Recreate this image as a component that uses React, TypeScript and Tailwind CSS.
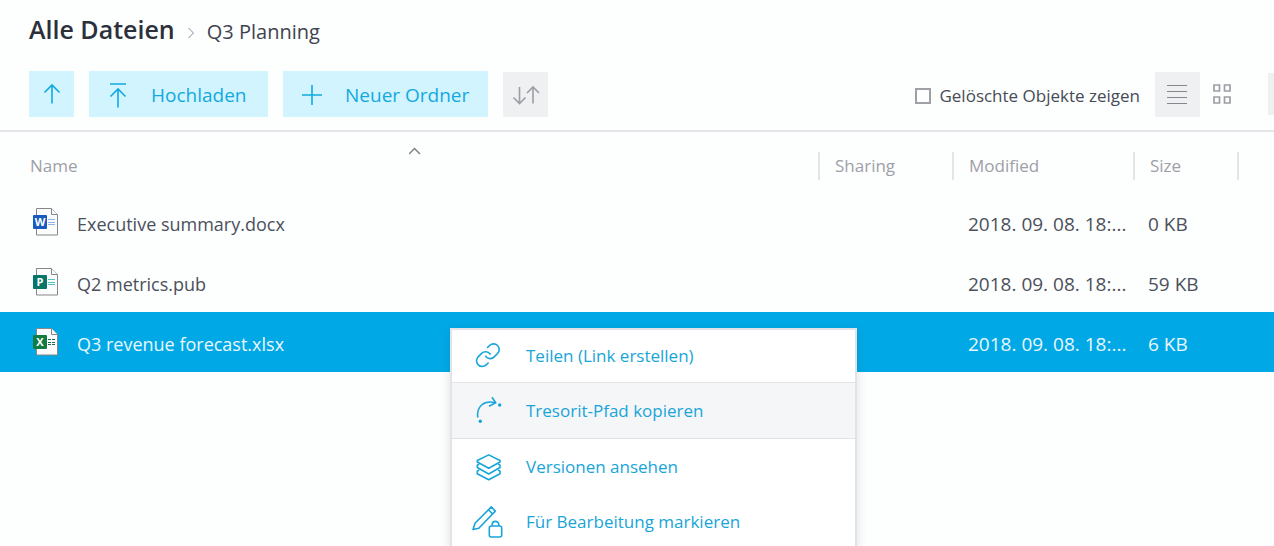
import type { ReactNode } from 'react'
import clsx from 'clsx'

type FileKind = 'word' | 'publisher' | 'excel'

interface FileEntry {
  name: string
  kind: FileKind
  modified: string
  size: string
  selected?: boolean
}

interface MenuEntry {
  label: string
  icon: ReactNode
  itemClass: string
}

const files: FileEntry[] = [
  { name: 'Executive summary.docx', kind: 'word', modified: '2018. 09. 08. 18:...', size: '0 KB' },
  { name: 'Q2 metrics.pub', kind: 'publisher', modified: '2018. 09. 08. 18:...', size: '59 KB' },
  { name: 'Q3 revenue forecast.xlsx', kind: 'excel', modified: '2018. 09. 08. 18:...', size: '6 KB', selected: true },
]

const kindConfig: Record<FileKind, { letter: string; badge: string; lines: string }> = {
  word: { letter: 'W', badge: '#185abd', lines: '#8fb4e8' },
  publisher: { letter: 'P', badge: '#077568', lines: '#4fc4bd' },
  excel: { letter: 'X', badge: '#107c41', lines: '#1f6b45' },
}

function FileIcon({ kind }: { kind: FileKind }) {
  const { letter, badge, lines } = kindConfig[kind]
  return (
    <svg width="26" height="28" viewBox="0 0 26 28" className="shrink-0" aria-hidden="true">
      <path d="M3.500 .5h15l6 6v20.500h-21z" fill="#fcfcfd" stroke="#85878c" strokeLinejoin="round" />
      <path d="M18.500 .5v6h6" fill="#fcfcfd" stroke="#85878c" />
      {kind === 'excel' ? (
        <path d="M15 11.500h3M19 11.500h3M15 14.500h3M19 14.500h3M15 16.500h3M19 16.500h3" stroke={lines} />
      ) : (
        <path d="M15 11.500h7M15 14.500h7M15 16.500h7" stroke={lines} />
      )}
      <rect x="0" y="7" width="14" height="14" rx="1" fill={badge} />
      <text x="7" y="18" textAnchor="middle" fontSize="11" fontWeight="700" fill="#fff">
        {letter}
      </text>
    </svg>
  )
}

function LineIcon({ size = 28, children }: { size?: number; children: ReactNode }) {
  return (
    <svg
      width={size}
      height={size}
      viewBox={`0 0 ${size} ${size}`}
      fill="none"
      stroke="currentColor"
      strokeWidth="1.600"
      className="shrink-0"
      aria-hidden="true"
    >
      {children}
    </svg>
  )
}

const menu: MenuEntry[] = [
  {
    label: 'Teilen (Link erstellen)',
    itemClass: 'h-[53px] border-b',
    icon: (
      <LineIcon size={32}>
        <g strokeLinecap="round" strokeWidth="1.400" transform="translate(2.200 1.500) scale(1.140)">
          <path d="M10 13a5 5 0 0 0 7.540.540l3-3a5 5 0 0 0-7.070-7.070l-1.720 1.710" />
          <path d="M14 11a5 5 0 0 0-7.540-.540l-3 3a5 5 0 0 0 7.070 7.070l1.710-1.710" />
        </g>
      </LineIcon>
    ),
  },
  {
    label: 'Tresorit-Pfad kopieren',
    itemClass: 'h-14 border-b bg-[#f5f6f8]',
    icon: (
      <LineIcon size={32}>
        <path d="M5.700 22.500C4.500 12 11.500 4.500 23.500 7.800" />
        <path d="M20 2.200l3.700 5.600-6.700 3.500" />
        <circle cx="27.700" cy="10" r="1.700" fill="currentColor" stroke="none" />
        <circle cx="8.300" cy="26.200" r="1.700" fill="currentColor" stroke="none" />
      </LineIcon>
    ),
  },
  {
    label: 'Versionen ansehen',
    itemClass: 'h-[55px]',
    icon: (
      <LineIcon size={32}>
        <g strokeLinejoin="round">
          <path d="M16.700 3.900 28 9.500v1.500L16.700 17.200 5.300 11V9.500z" />
          <path d="M7.200 13 5.300 14.200V16.500l11.400 6.500L28 16.500v-2.300L26.200 13" />
          <path d="M7.200 19 5.300 20.200V22.700l11.400 6L28 22.700v-2.500L26.200 19" />
        </g>
      </LineIcon>
    ),
  },
  {
    label: 'Für Bearbeitung markieren',
    itemClass: 'h-[55px]',
    icon: (
      <LineIcon size={32}>
        <g strokeLinejoin="round">
          <path d="M1 23.500 3 17.200 19.300.9l4 4.200L6.800 22.300z" />
          <path d="M16.500 3.800l4.100 4.200" />
          <rect x="17.300" y="20" width="12.400" height="11" rx="2" />
          <path d="M20.200 20v-1.300a3.300 3.300 0 0 1 6.600 0V20" />
        </g>
      </LineIcon>
    ),
  },
]

function Breadcrumbs() {
  return (
    <nav aria-label="Pfad" className="flex h-[71px] items-baseline pl-[29px] pt-3">
      <a href="#" className="text-[25px] leading-[34px] font-semibold text-[#2b303b]">
        Alle Dateien
      </a>
      <svg width="8" height="12" viewBox="0 0 8 12" className="mx-3" fill="none" stroke="#8b8e96" aria-hidden="true">
        <path d="M1.500 1l5 5-5 5" />
      </svg>
      <a href="#" className="text-xl text-[#3f434f]">
        Q3 Planning
      </a>
    </nav>
  )
}

function Toolbar() {
  return (
    <div className="flex h-[61px] items-start border-b-2 border-[#e4e5e8] pl-[29px]">
      <div className="flex items-end gap-[15px] text-[19px] text-[#12a9e0]">
        <button aria-label="Nach oben" className="flex h-[46px] w-[45px] items-center justify-center bg-[#d2f4fe]">
          <LineIcon size={24}>
            <path d="M12 21.500V2.500M4.500 10.500 12 3l7.500 7.500" />
          </LineIcon>
        </button>
        <button className="flex h-[46px] w-[179px] items-center gap-5 bg-[#d2f4fe] pl-4 pt-0.5">
          <LineIcon size={26}>
            <path d="M5 2h16M13 25.500V7M5.500 14.500 13 7l7.500 7.500" />
          </LineIcon>
          Hochladen
        </button>
        <button className="flex h-[46px] w-[205px] items-center gap-5 bg-[#d2f4fe] pl-4 pt-0.5">
          <LineIcon size={26}>
            <path d="M13 3v20M3 13h20" />
          </LineIcon>
          Neuer Ordner
        </button>
        <button
          aria-label="Sortieren"
          className="flex size-[45px] items-center justify-center bg-[#eff0f2] text-[#9c9ea4]"
        >
          <LineIcon size={28}>
            <path d="M7.500 6v16.500M1.500 16.500l6 6 6-6M21 22.500V6M15 12l6-6 6 6" />
          </LineIcon>
        </button>
      </div>

      <div className="ml-auto flex h-[46px] items-end">
        <label className="mr-[15px] flex h-[45px] items-center gap-2 pt-0.5 text-[17px] text-[#474b57]">
          <input type="checkbox" className="size-4 appearance-none border-2 border-[#9fa1a6] bg-white" />
          Gelöschte Objekte zeigen
        </label>
        <button
          aria-label="Listenansicht"
          className="flex size-[45px] items-center justify-center bg-[#eff0f2] text-[#85878d]"
        >
          <svg width="21" height="20" viewBox="0 0 21 20" stroke="currentColor" aria-hidden="true">
            <path d="M0 .5h20M0 6.500h20M0 12.500h20M0 18.500h20" />
          </svg>
        </button>
        <button aria-label="Kachelansicht" className="flex size-[45px] items-center justify-center text-[#9c9ea4]">
          <svg width="19" height="21" viewBox="0 0 19 21" fill="none" stroke="currentColor" strokeWidth="1.700" aria-hidden="true">
            <path d="M1 1h5.500v6H1zM11.500 1H17v6h-5.500zM1 13h5.500v6H1zM11.500 13H17v6h-5.500z" />
          </svg>
        </button>
        <button aria-label="Details" className="mb-0.5 ml-[23px] h-[42px] w-1.5 bg-[#eff0f2]" />
      </div>
    </div>
  )
}

function ColumnLabel({ children }: { children?: ReactNode }) {
  return <div className="h-7 border-l-2 border-[#e4e5e8] pl-[15px] leading-7">{children}</div>
}

function FileTable() {
  return (
    <table className="w-full table-fixed text-left text-[19px] text-[#4c505b]">
      <colgroup>
        <col />
        <col className="w-[134px]" />
        <col className="w-[181px]" />
        <col className="w-[104px]" />
        <col className="w-[37px]" />
      </colgroup>
      <thead>
        <tr className="h-[60px] text-[17px] text-[#9da0a7] *:p-0 *:pt-2 *:font-normal">
          <th aria-sort="ascending" className="relative">
            <div className="pl-[30px]">Name</div>
            <svg
              width="14"
              height="8"
              viewBox="0 0 14 8"
              className="absolute left-1/2 top-[15px]"
              fill="none"
              stroke="#7f8289"
              strokeWidth="1.500"
              aria-hidden="true"
            >
              <path d="M0 7l5.500-5.500L11 7" />
            </svg>
          </th>
          <th><ColumnLabel>Sharing</ColumnLabel></th>
          <th><ColumnLabel>Modified</ColumnLabel></th>
          <th><ColumnLabel>Size</ColumnLabel></th>
          <td><ColumnLabel /></td>
        </tr>
      </thead>
      <tbody>
        {files.map(file => (
          <tr key={file.name} className={clsx('h-[60px] *:p-0 *:pt-1', file.selected && 'bg-[#00a9e6] text-[#e8f7fd]')}>
            <td>
              <div className="flex items-start gap-[18px] pl-[33px]">
                <FileIcon kind={file.kind} />
                <span className="truncate text-lg leading-8">{file.name}</span>
              </div>
            </td>
            <td />
            <td><div className="pl-4">{file.modified}</div></td>
            <td><div className="pl-[15px]">{file.size}</div></td>
            <td />
          </tr>
        ))}
      </tbody>
    </table>
  )
}

function ContextMenu() {
  return (
    <div
      role="menu"
      className="absolute left-[450px] top-[328px] flex w-[407px] flex-col border-2 border-[#e2e3e6] bg-white shadow-[0_2px_10px_rgba(40,50,80,0.14)]"
    >
      {menu.map(({ label, icon, itemClass }) => (
        <button
          key={label}
          role="menuitem"
          className={clsx('flex items-center gap-[22px] border-[#e2e3e6] pl-5 text-left text-[17px] text-[#18a5d8]', itemClass)}
        >
          {icon}
          {label}
        </button>
      ))}
    </div>
  )
}

export default function App() {
  return (
    <main className="relative min-h-screen overflow-hidden bg-[#fdfefe] font-['Open_Sans','Noto_Sans',sans-serif]">
      <Breadcrumbs />
      <Toolbar />
      <FileTable />
      <ContextMenu />
    </main>
  )
}
